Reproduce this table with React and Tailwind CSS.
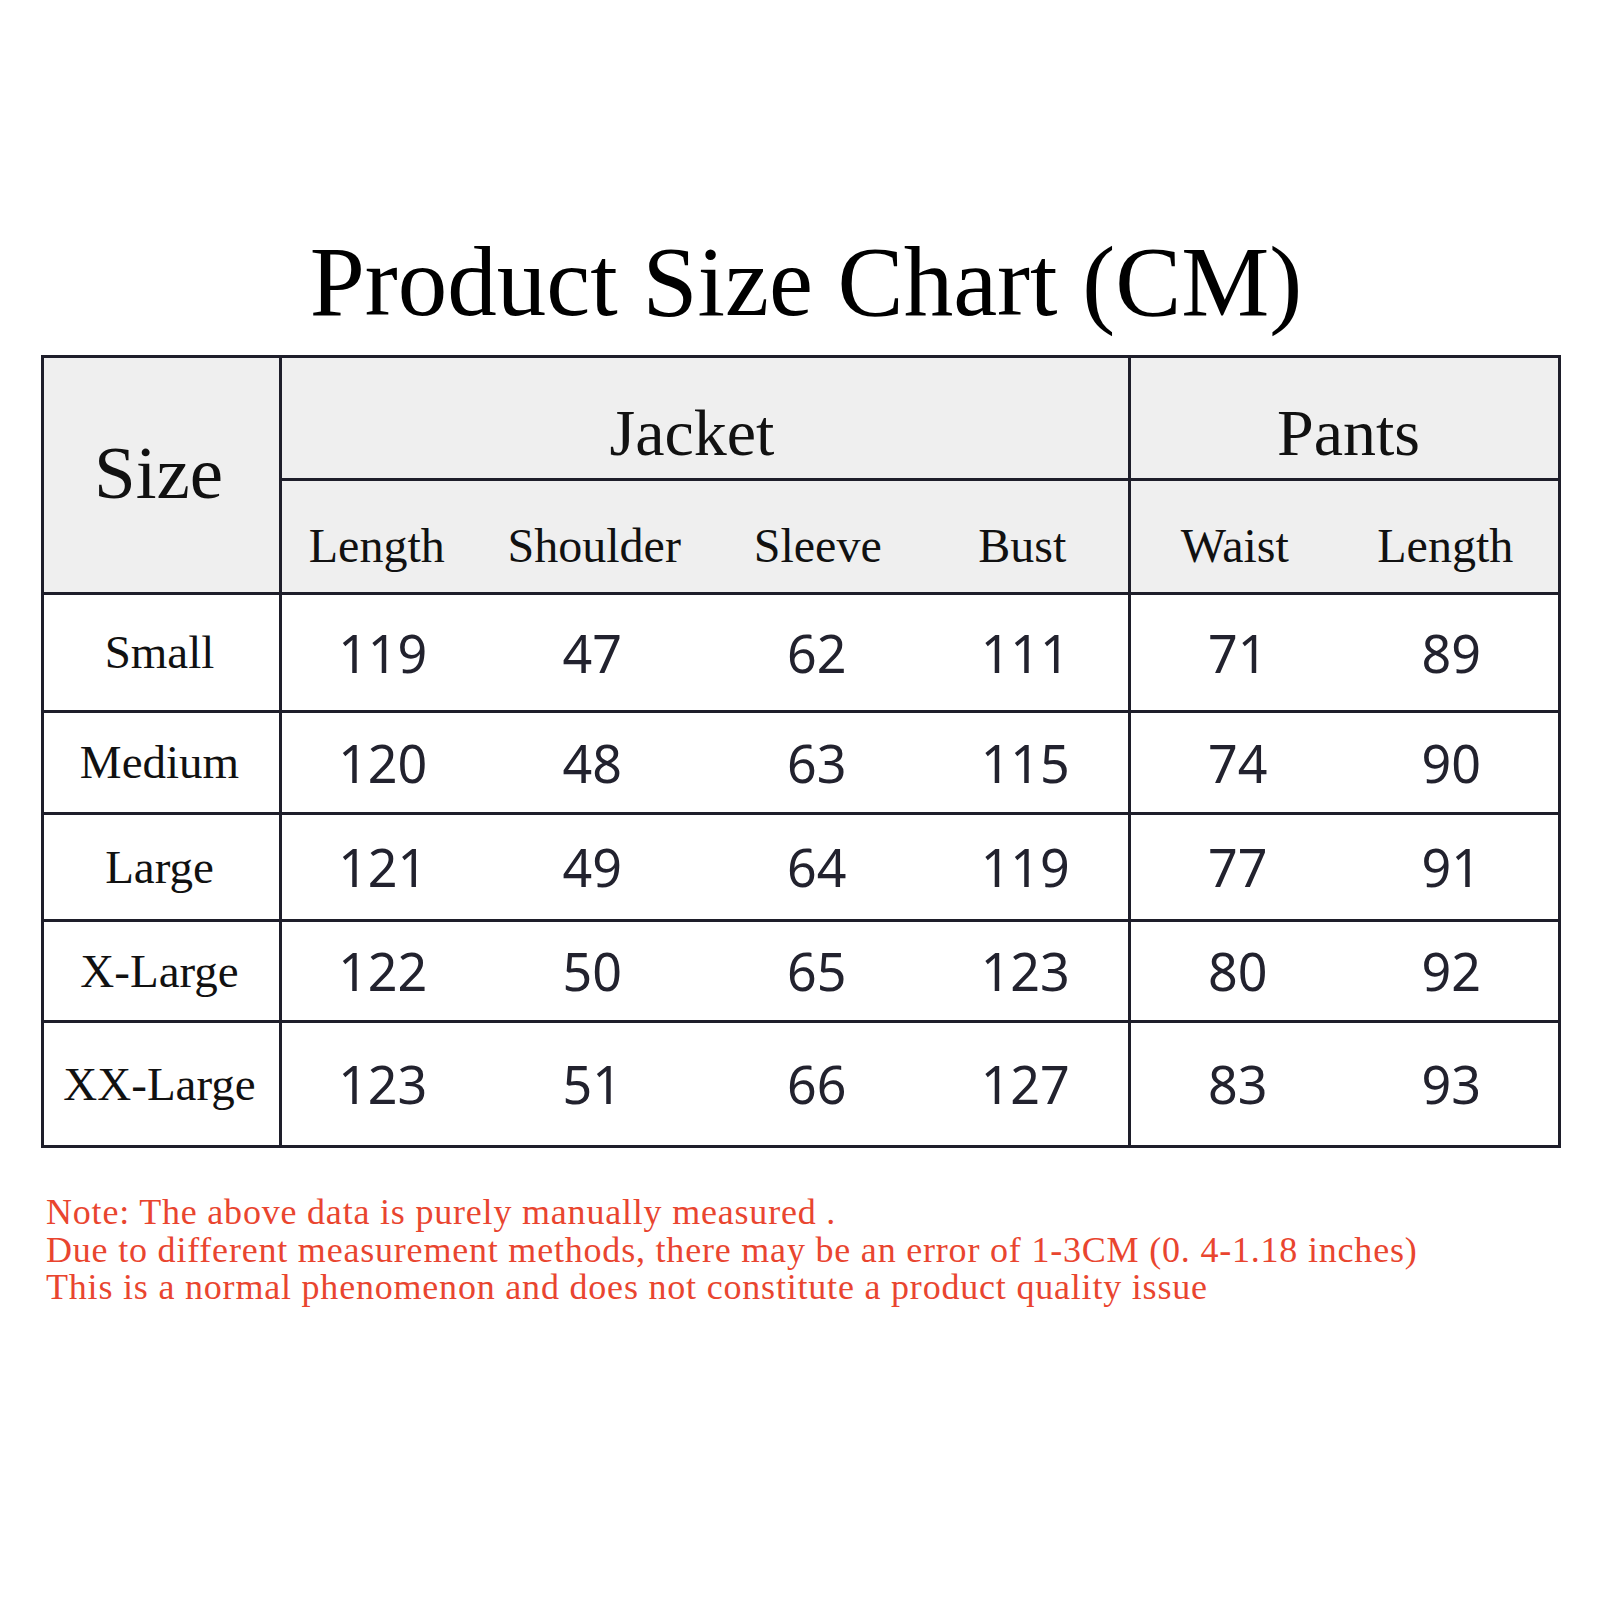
import React from 'react';

const jacketCols = ['Length', 'Shoulder', 'Sleeve', 'Bust'];
const pantsCols = ['Waist', 'Length'];

// small nudges so labels sit where the chart has them
const headNudge = ['pr-[22px]', 'pr-[10px]', 'pl-[14px]', '', 'pr-[6px]', 'pr-[12px]'];
const cellNudge = ['pr-[10px]', 'pr-[14px]', 'pl-[12px]', 'pl-[6px]', '', ''];

const rows = [
  { size: 'Small', values: [119, 47, 62, 111, 71, 89] },
  { size: 'Medium', values: [120, 48, 63, 115, 74, 90] },
  { size: 'Large', values: [121, 49, 64, 119, 77, 91] },
  { size: 'X-Large', values: [122, 50, 65, 123, 80, 92] },
  { size: 'XX-Large', values: [123, 51, 66, 127, 83, 93] },
];

const serif = "font-['Liberation_Serif','Times_New_Roman',serif]";
const sans = "font-['Noto_Sans','Open_Sans',sans-serif]";

const App = () => {
  return (
    <div className="w-[1600px] h-[1600px] bg-white overflow-hidden">
      {/* title */}
      <div className="pt-[232px] flex justify-center pl-[12px]">
        <h1 className={`${serif} text-[99px] leading-none text-black`}>Product Size Chart (CM)</h1>
      </div>

      {/* size table */}
      <div className="ml-[41px] mt-[24px] w-[1520px] border-[3px] border-[#1e1e2a]">
        <div className="grid grid-cols-[235px_214.5px_211.5px_211.5px_211.5px_216.5px_213.5px] grid-rows-[120px_114px_118px_102px_107px_101px_125px]">
          {/* header */}
          <div className={`row-span-2 bg-[#efefef] flex items-center justify-center pb-[6px] pr-[6px] ${serif} text-[75px] leading-none text-[#111]`}>
            Size
          </div>
          <div className={`col-span-4 bg-[#efefef] border-l-[3px] border-[#1e1e2a] flex items-center justify-center pt-[30px] pr-[26px] ${serif} text-[66px] leading-none text-[#111]`}>
            Jacket
          </div>
          <div className={`col-span-2 bg-[#efefef] border-l-[3px] border-[#1e1e2a] flex items-center justify-center pt-[30px] pl-[8px] ${serif} text-[66px] leading-none text-[#111]`}>
            Pants
          </div>
          {[...jacketCols, ...pantsCols].map((label, i) => (
            <div
              key={i}
              className={`bg-[#efefef] border-t-[3px] border-[#1e1e2a] flex items-center justify-center pt-[18px] ${headNudge[i]} ${serif} text-[48px] leading-none text-[#111] ${i === 0 || i === 4 ? 'border-l-[3px]' : ''}`}
            >
              {label}
            </div>
          ))}

          {/* data rows */}
          {rows.map((row) => (
            <React.Fragment key={row.size}>
              <div className={`border-t-[3px] border-[#1e1e2a] bg-white flex items-center justify-center pr-[4px] ${serif} text-[47px] leading-none text-[#111]`}>
                {row.size}
              </div>
              {row.values.map((v, i) => (
                <div
                  key={i}
                  className={`border-t-[3px] border-[#1e1e2a] bg-white flex items-center justify-center ${cellNudge[i]} ${sans} text-[52px] leading-none text-[#22222e] ${i === 0 || i === 4 ? 'border-l-[3px]' : ''}`}
                >
                  {v}
                </div>
              ))}
            </React.Fragment>
          ))}
        </div>
      </div>

      {/* note */}
      <div className={`mt-[46px] pl-[46px] ${serif} text-[36px] leading-[37.5px] tracking-[0.8px] text-[#e9452f]`}>
        <p>Note: The above data is purely manually measured .</p>
        <p>Due to different measurement methods, there may be an error of 1-3CM (0. 4-1.18 inches)</p>
        <p>This is a normal phenomenon and does not constitute a product quality issue</p>
      </div>
    </div>
  );
};

export default App;
